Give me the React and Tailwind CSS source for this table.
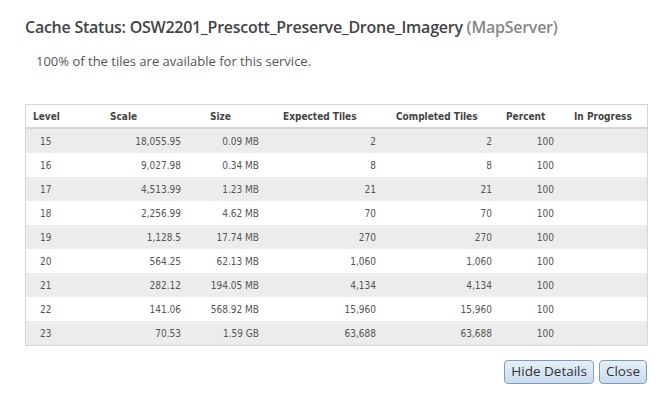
const rows = [
  ["15", "18,055.95", "0.09 MB", "2", "2", "100"],
  ["16", "9,027.98", "0.34 MB", "8", "8", "100"],
  ["17", "4,513.99", "1.23 MB", "21", "21", "100"],
  ["18", "2,256.99", "4.62 MB", "70", "70", "100"],
  ["19", "1,128.5", "17.74 MB", "270", "270", "100"],
  ["20", "564.25", "62.13 MB", "1,060", "1,060", "100"],
  ["21", "282.12", "194.05 MB", "4,134", "4,134", "100"],
  ["22", "141.06", "568.92 MB", "15,960", "15,960", "100"],
  ["23", "70.53", "1.59 GB", "63,688", "63,688", "100"],
];

const cols = "grid grid-cols-[76px_100px_73px_113px_110px_68px_1fr]";

function Button({ children }) {
  return (
    <button className="h-[24px] px-[6px] rounded-[4px] border border-[#7f9db9] bg-gradient-to-b from-[#e6eff8] to-[#c9dbee] text-[13.5px] text-[#333] leading-none font-['Open_Sans',sans-serif]">
      {children}
    </button>
  );
}

export default function App() {
  return (
    <div className="w-[667px] h-[395px] bg-white pl-[25px] pr-[20px] pt-[16px] font-['DejaVu_Sans_Condensed','DejaVu_Sans',sans-serif]">
      {/* Title */}
      <h1 className="text-[16px] leading-[22px] font-semibold text-[#444] font-['Open_Sans',sans-serif] tracking-[-0.25px]">
        Cache Status: OSW2201_Prescott_Preserve_Drone_Imagery{" "}
        <span className="text-[#888]">(MapServer)</span>
      </h1>
      <p className="mt-[14px] ml-[11px] text-[13px] leading-[18px] text-[#555] font-['Open_Sans',sans-serif]">
        100% of the tiles are available for this service.
      </p>

      {/* Table */}
      <div className="mt-[34px] mr-[-1px] border border-[#d6d6d6] text-[10px]">
        <div className={`${cols} h-[24px] items-center font-bold text-[#444] border-b-2 border-[#d6d6d6]`}>
          <div className="pl-[7px]">Level</div>
          <div className="pl-[8px]">Scale</div>
          <div className="pl-[8px]">Size</div>
          <div className="pl-[8px]">Expected Tiles</div>
          <div className="pl-[8px]">Completed Tiles</div>
          <div className="pl-[8px]">Percent</div>
          <div className="pl-[8px]">In Progress</div>
        </div>
        {rows.map((r, i) => (
          <div
            key={r[0]}
            className={`${cols} h-[24px] items-center text-[#555] ${i % 2 === 0 ? "bg-[#ececec]" : "bg-white"}`}
          >
            <div className="pl-[14px]">{r[0]}</div>
            <div className="text-right pr-[21px]">{r[1]}</div>
            <div className="text-right pr-[16px]">{r[2]}</div>
            <div className="text-right pr-[12px]">{r[3]}</div>
            <div className="text-right pr-[6px]">{r[4]}</div>
            <div className="text-right pr-[12px]">{r[5]}</div>
            <div></div>
          </div>
        ))}
      </div>

      {/* Buttons */}
      <div className="mt-[14px] flex justify-end gap-[5px]">
        <Button>Hide Details</Button>
        <Button>Close</Button>
      </div>
    </div>
  );
}
